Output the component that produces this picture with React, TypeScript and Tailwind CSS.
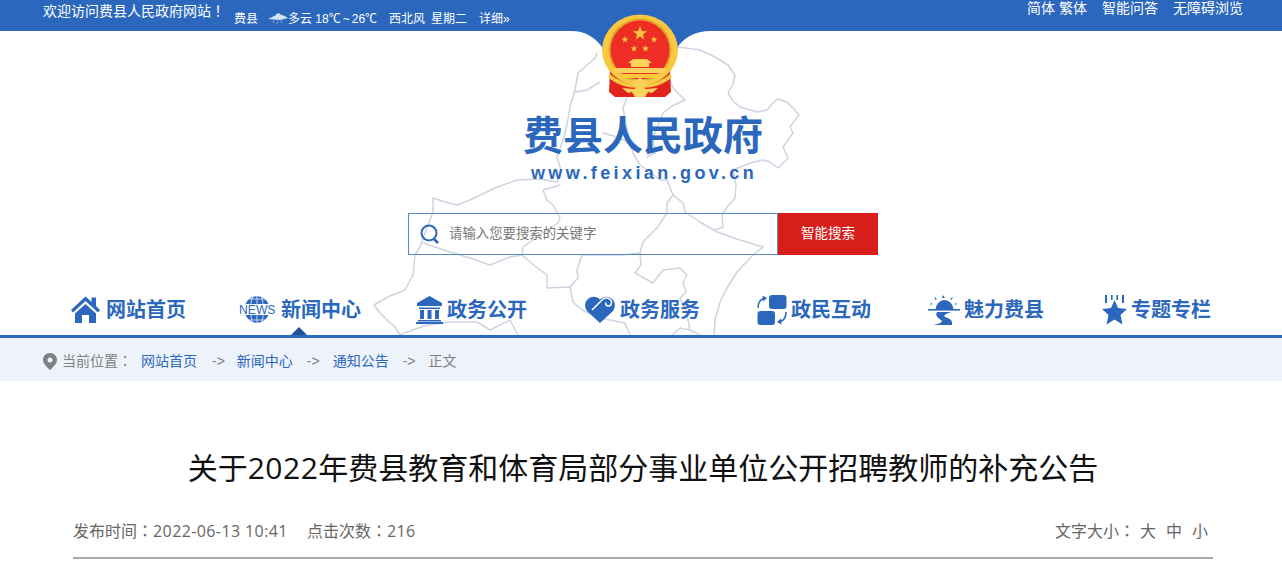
import React from "react";

const CJK = "font-['Liberation_Sans','Noto_Sans_CJK_SC',sans-serif]";
const TC = "font-['Noto_Sans_CJK_TC',sans-serif]";

function MapLines() {
  const lines = [
    "M678 47 L700 50 L717 58 L728 65 L735 75 L733 84 L728 93 L733 101 L740 107 L757 112 L767 110 L773 103 L778 99 L787 102 L793 108 L799 115 L790 127 L793 133 L783 147 L788 158 L778 168 L770 162 L763 160 L750 163 L733 170 L736 185 L735 198 L728 206 L722 215 L723 227 L715 230",
    "M597 53 L595 58 L585 67 L578 73 L575 90 L570 107 L567 125 L563 140 L557 157 L561 170 L557 182 L540 179 L517 180 L495 188 L470 200 L457 205 L445 202 L433 198 L433 212 L428 225 L420 247 L415 255 L413 275 L405 290 L400 292 L390 296 L379 302 L374 305 L380 313 L387 320 L395 327 L400 335",
    "M575 92 L587 90 L600 82",
    "M627 97 L623 108 L626 125 L630 143 L633 153 L640 165 L650 172 L660 180 L667 180 L673 195 L667 203 L667 213 L657 228 L643 242 L640 253 L622 255 L602 255 L582 255 L577 270 L578 278 L570 287 L573 302 L582 310",
    "M670 80 L673 88 L685 100 L672 106 L663 113 L653 137 L655 153 L647 157",
    "M603 133 L617 137 L630 143",
    "M673 195 L683 203 L685 212 L700 222 L717 232 L740 240 L763 247 L753 255 L737 272 L727 288 L720 302 L715 320 L714 335",
    "M560 185 L543 190 L547 200 L553 205 L560 218 L558 223 L540 235 L523 247 L522 255 L535 266 L547 275 L547 288 L570 287",
    "M423 243 L450 252 L470 258 L490 265 L510 257 L523 255",
    "M640 253 L641 265 L635 273 L653 283 L663 270 L680 268 L687 275 L683 282 L686 292 L680 298 L686 310 L690 330 L680 328 L672 335",
    "M690 330 L700 335",
    "M400 335 L407 332 L427 325 L450 322 L477 322 L490 330 L510 320 L518 335",
    "M582 310 L600 318 L625 323 L630 335",
  ];
  return (
    <svg className="absolute left-0 top-0 pointer-events-none" width="1282" height="304" viewBox="0 31 1282 304" fill="none">
      {lines.map((d) => (
        <path key={d} d={d} stroke="#cdd4e1" strokeWidth="1.5" strokeLinejoin="round" strokeLinecap="round" />
      ))}
    </svg>
  );
}

function Emblem() {
  const star = (cx: number, cy: number, r: number) => {
    const pts: string[] = [];
    for (let i = 0; i < 10; i++) {
      const rr = i % 2 === 0 ? r : r * 0.4;
      const a = -Math.PI / 2 + (i * Math.PI) / 5;
      pts.push(`${(cx + rr * Math.cos(a)).toFixed(1)},${(cy + rr * Math.sin(a)).toFixed(1)}`);
    }
    return pts.join(" ");
  };
  return (
    <svg className="absolute left-[560px] top-0" width="160" height="100" viewBox="560 0 160 100">
      <path d="M572 31 C585 31 597 38 604 50 L676 50 C682 38 695 31 711 31 Z" fill="#2b68bd" />
      <path d="M610 70 L609 92 L615 97 L665 97 L671 92 L670 70 Z" fill="#e3231b" />
      <ellipse cx="640" cy="50" rx="38" ry="35.5" fill="#f8c840" />
      <ellipse cx="640" cy="50" rx="31.5" ry="31.5" fill="#dfa42c" />
      <ellipse cx="640" cy="50" rx="29.5" ry="29.5" fill="#ee2d24" />
      <polygon points={star(640, 33.5, 7.5)} fill="#f5c53c" />
      <polygon points={star(625, 39.5, 3.6)} fill="#f5c53c" />
      <polygon points={star(654, 39.5, 3.6)} fill="#f5c53c" />
      <polygon points={star(634, 48.5, 3.6)} fill="#f5c53c" />
      <polygon points={star(645.5, 48.5, 3.6)} fill="#f5c53c" />
      <path d="M633 59 H647 L652 63 H649 V67 H631 V63 H628 Z" fill="#fcd25c" />
      <path d="M615 68 H665 L667 73 H613 Z" fill="#fcd25c" />
      <path d="M615 74 H665 L660 78 H620 Z" fill="#f8c840" />
      <path d="M610 74 C618 81 628 84 640 84 C652 84 662 81 670 74 L672 77 C664 85 652 88 640 88 C628 88 616 85 608 77 Z" fill="#f8c840" />
      <path d="M632 85 L634 79 L637 80 L640 77 L643 80 L646 79 L648 85 L644 87 H636 Z" fill="#fcd25c" />
      <path d="M622 88 L634 89 L638 87 H642 L646 89 L658 88 L652 93 L648 92 L645 97 H635 L632 92 L628 93 Z" fill="#fcd25c" />
    </svg>
  );
}

function HomeIcon() {
  return (
    <svg width="29" height="28" viewBox="0 0 29 28" fill="#2b68bd">
      <path d="M14.5 0.5 L20.5 6 V1.5 H25 V10 L29 14 L27 16.5 L14.5 5 L2 16.5 L0 14 Z" />
      <path d="M14.5 8 L25 17.5 V27 H18 V19 H11 V27 H4 V17.5 Z" />
    </svg>
  );
}

function NewsIcon() {
  return (
    <div className="relative w-[38px] h-[30px] flex items-center justify-center">
      <svg className="absolute left-[6px] top-0" width="26" height="30" viewBox="0 0 26 30" fill="none">
        <path d="M1.5 9 A13 14.5 0 0 1 24.5 9 Z" fill="#2b68bd" />
        <path d="M1.5 20 A13 14.5 0 0 0 24.5 20 Z" fill="#2b68bd" />
        <path d="M13 0 V9 M13 20 V30 M9 1 Q7 5 7 9 M17 1 Q19 5 19 9 M9 29 Q7 25 7 20 M17 29 Q19 25 19 20 M5 4 H21 M5 25 H21" stroke="#fff" strokeWidth="0.7" />
      </svg>
      <span className="relative font-['Liberation_Sans',sans-serif] text-[13.5px] leading-none text-[#2b68bd] scale-x-90">NEWS</span>
    </div>
  );
}

function BankIcon() {
  return (
    <svg width="27" height="28" viewBox="0 0 27 28" fill="#2b68bd">
      <path d="M13.5 0 L26 7 V10 H1 V7 Z" />
      <rect x="3" y="11.5" width="21" height="1.5" />
      <rect x="4" y="14" width="4" height="9" />
      <rect x="11.5" y="14" width="4" height="9" />
      <rect x="19" y="14" width="4" height="9" />
      <rect x="2" y="24" width="23" height="1.5" />
      <rect x="0" y="26" width="27" height="2" />
    </svg>
  );
}

function HeartIcon() {
  return (
    <svg width="30" height="28" viewBox="0 0 30 28">
      <path d="M15 27 L2.5 15.5 C-1 11.5 -0.5 6 3 3 C7 -0.5 12 0.5 15 3.5 C18 0.5 23 -0.5 27 3 C30.5 6 31 11.5 27.5 15.5 Z" fill="#2b68bd" />
      <path d="M7 14 L18 3 C21 1 25.5 2 26.5 5.5 C27 8 25.5 10 23.5 10 C21.5 10 20 8.5 21 6.5" fill="none" stroke="#fff" strokeWidth="1.6" />
    </svg>
  );
}

function SwapIcon() {
  return (
    <svg width="30" height="30" viewBox="0 0 30 30" fill="#2b68bd">
      <rect x="12" y="0" width="17.5" height="14" rx="3" />
      <rect x="0.5" y="16" width="17.5" height="14" rx="3" />
      <path d="M1 13 C1 8 2.5 5 6.5 3.5" fill="none" stroke="#2b68bd" strokeWidth="1.6" />
      <path d="M5.5 0.5 L10 3 L6 6.5 Z" />
      <path d="M29 17 C29 22 27.5 25 23.5 26.5" fill="none" stroke="#2b68bd" strokeWidth="1.6" />
      <path d="M24.5 29.5 L20 27 L24 23.5 Z" />
    </svg>
  );
}

function SunIcon() {
  return (
    <svg width="32" height="30" viewBox="0 0 32 30" fill="#2b68bd">
      <path d="M7.5 15 A9 10 0 0 1 25.5 15 Z" />
      <rect x="0" y="14" width="32" height="1.6" />
      <path d="M15 0 L17 3 H14 Z M6 2 L9 4 L7.5 5 Z M25 2 L22 4 L23.5 5 Z M3 7 L4 9.5 L2.5 10 Z M28 7 L27 9.5 L28.5 10 Z" />
      <path d="M9 17 H23 C18 19 15 20 17 22 C21 23 25 25 24 30 H6 C9 29 14 28 14 26 C12 24 6 21 9 17 Z" />
    </svg>
  );
}

function StarIcon() {
  return (
    <svg width="25" height="30" viewBox="0 0 25 30" fill="#2b68bd">
      <path d="M12.5 5 L16 13 L25 14 L18.5 20 L20.5 29.5 L12.5 24.5 L4.5 29.5 L6.5 20 L0 14 L9 13 Z" />
      <rect x="3" y="0" width="2" height="8" />
      <rect x="9" y="0" width="1.6" height="5" />
      <rect x="14.4" y="0" width="1.6" height="5" />
      <rect x="20" y="0" width="2" height="8" />
    </svg>
  );
}

const navItems = [
  { label: "网站首页", icon: <HomeIcon />, cls: "gap-[6px]" },
  { label: "新闻中心", icon: <NewsIcon />, cls: "gap-[5px] ml-[52px]" },
  { label: "政务公开", icon: <BankIcon />, cls: "gap-[4px] ml-[55px]" },
  { label: "政务服务", icon: <HeartIcon />, cls: "gap-[5px] ml-[58px]" },
  { label: "政民互动", icon: <SwapIcon />, cls: "gap-[4px] ml-[57px]" },
  { label: "魅力费县", icon: <SunIcon />, cls: "gap-[4px] ml-[57px]" },
  { label: "专题专栏", icon: <StarIcon />, cls: "gap-[4px] ml-[58px]" },
];

export default function App() {
  return (
    <main className={`${CJK} w-full h-[566px] overflow-hidden bg-white`}>
      {/* top bar */}
      <div className="h-[31px] bg-[#2b68bd] text-white flex">
        <span className="ml-[43px] text-[14px] leading-[20px]">
          欢迎访问费县人民政府网站<span className={TC}>！</span>
        </span>
        <div className="ml-[9px] pt-[9px] flex items-start text-[12px] leading-[20px] whitespace-pre">
          <span>费县</span>
          <svg className="ml-[10px] mt-[2px]" width="20" height="14" viewBox="0 0 20 14">
            <path d="M0 8 C3 7 5 5 7 5 C8 2 12 1 13 4 C16 4 18 6 20 7 L12 9 Z" fill="#d5e2f2" />
            <path d="M6 9 L5 12 M10 10 L9 13 M14 9 L13 12" stroke="#7fa3d6" strokeWidth="1" />
          </svg>
          <span>多云 18℃<span className="mx-[2px]">~</span>26℃</span>
          <span className="ml-[12px]">西北风</span>
          <span className="ml-[6px]">星期二</span>
          <span className="ml-[12px]">详细»</span>
        </div>
        <div className="ml-auto mr-[39px] -mt-[2px] flex text-[14px] leading-[20px]">
          <span>简体</span>
          <span className="ml-[4px]">繁体</span>
          <span className="ml-[15px]">智能问答</span>
          <span className="ml-[15px]">无障碍浏览</span>
        </div>
      </div>

      {/* header */}
      <header className="relative h-[304px] flex flex-col">
        <MapLines />
        <div className="absolute left-0 -top-[31px] w-full h-[110px] pointer-events-none">
          <Emblem />
        </div>
        <div className="relative flex flex-col items-center pl-[4px] pt-[80px]">
          <h1 className="text-[40px] leading-[50px] font-bold text-[#2b68bd]">费县人民政府</h1>
          <p className="pl-[2px] text-[18px] leading-[24px] font-bold tracking-[3.4px] text-[#2b68bd]">www.feixian.gov.cn</p>
          <div className="mt-[28px] flex w-[470px] h-[42px]">
            <div className="w-[370px] flex items-center border border-[#5a87cb] pl-[11px]">
              <svg width="20" height="20" viewBox="0 0 20 20" fill="none" stroke="#2b68bd">
                <circle cx="9" cy="9" r="7.5" strokeWidth="2" />
                <path d="M14 15 L18 19" strokeWidth="2.5" />
              </svg>
              <input
                className="ml-[9px] flex-1 min-w-0 bg-transparent outline-none text-[13.4px] text-[#777] placeholder:text-[#777]"
                placeholder="请输入您要搜索的关键字"
              />
            </div>
            <button className="w-[100px] bg-[#d81e1a] text-white text-[13.5px]">智能搜索</button>
          </div>
        </div>
        <nav className="relative mt-auto mb-[10px] ml-[71px] flex">
          {navItems.map((item) => (
            <div key={item.label} className={`flex items-center h-[30px] ${item.cls}`}>
              {item.icon}
              <span className="text-[20px] leading-[30px] font-bold text-[#2b68bd]">{item.label}</span>
            </div>
          ))}
        </nav>
        <div className="absolute left-[291px] bottom-0 w-0 h-0 border-x-[8px] border-x-transparent border-b-[8px] border-b-[#1f5299]" />
      </header>

      {/* breadcrumb */}
      <div className="h-[46px] border-t-[3px] border-[#2b68bd] bg-[#eef2fb] flex items-center pl-[43px] pt-[3px] text-[14px] text-[#808080]">
        <svg width="14" height="17" viewBox="0 0 14 17" fill="#808080">
          <path fillRule="evenodd" d="M7 0 C11 0 14 3 14 7 C14 11 9 15 7 17 C5 15 0 11 0 7 C0 3 3 0 7 0 Z M7 4.5 A2.5 2.5 0 1 0 7 9.5 A2.5 2.5 0 1 0 7 4.5 Z" />
        </svg>
        <span className="ml-[5px]">当前位置<span className={TC}>：</span></span>
        <a className="ml-[9px] text-[#2b68bd]">网站首页</a>
        <span className="ml-[15px]">-&gt;</span>
        <a className="ml-[12px] text-[#2b68bd]">新闻中心</a>
        <span className="ml-[14px]">-&gt;</span>
        <a className="ml-[13px] text-[#2b68bd]">通知公告</a>
        <span className="ml-[14px]">-&gt;</span>
        <span className="ml-[13px]">正文</span>
      </div>

      {/* article head */}
      <section className="ml-[73px] w-[1140px]">
        <h2 className="mt-[65px] text-center text-[30px] leading-[44px] text-[#111]">
          关于<span className="font-['Open_Sans',sans-serif] tracking-[0.5px]">2022</span>年费县教育和体育局部分事业单位公开招聘教师的补充公告
        </h2>
        <div className="mt-[29px] pb-[13px] flex justify-between border-b-2 border-[#aaaaaa] text-[16px] leading-[24px] text-[#666]">
          <div className="flex gap-[19px]">
            <span>
              发布时间<span className={`${TC} leading-none`}>：</span>
              <span className="font-['Open_Sans',sans-serif] tracking-[0.4px] leading-none">2022-06-13 10:41</span>
            </span>
            <span>
              点击次数<span className={`${TC} leading-none`}>：</span>
              <span className="font-['Open_Sans',sans-serif] tracking-[0.4px] leading-none">216</span>
            </span>
          </div>
          <div className="flex pr-[5px]">
            <span>文字大小<span className={`${TC} leading-none`}>：</span></span>
            <span className="ml-[5px]">大</span>
            <span className="ml-[10px]">中</span>
            <span className="ml-[10px]">小</span>
          </div>
        </div>
      </section>
    </main>
  );
}
